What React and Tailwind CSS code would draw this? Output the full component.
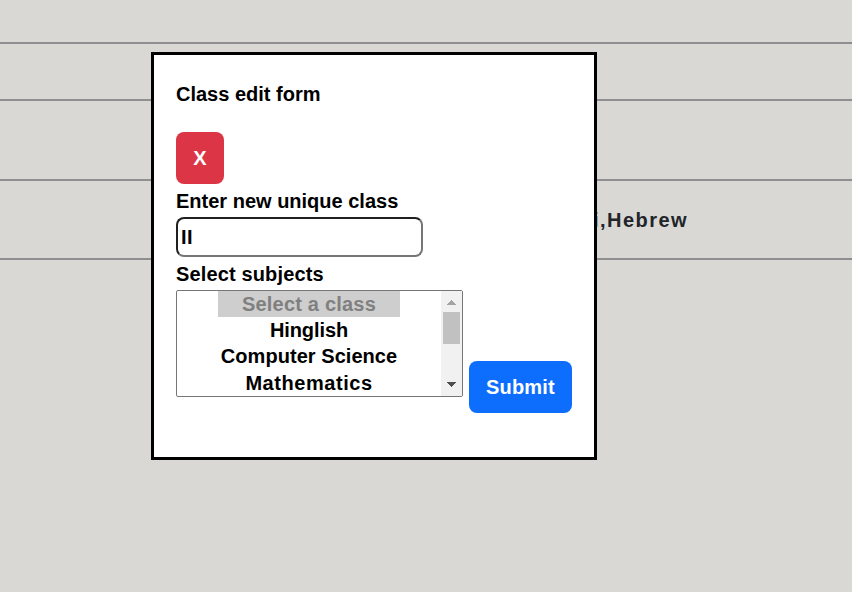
const subjects = [
  { name: "Hinglish", spacing: "tracking-[-0.1px]" },
  { name: "Computer Science", spacing: "tracking-[0.05px]" },
  { name: "Mathematics", spacing: "tracking-[0.55px]" },
];

function TableRows() {
  return (
    <div className="flex flex-col">
      <div className="h-[44px] border-b-2 border-[#8f8e90]" />
      <div className="h-[57px] border-b-2 border-[#8f8e90]" />
      <div className="h-[80px] border-b-2 border-[#8f8e90]" />
      <div className="flex h-[79px] items-center border-b-2 border-[#8f8e90] pl-[593px] text-[#212529]">
        <span className="tracking-[1.45px]">i,Hebrew</span>
      </div>
    </div>
  );
}

function SubjectList() {
  return (
    <div className="flex h-[107px] w-[287px] shrink-0 rounded-[2px] border border-[#767676] bg-white">
      <div className="flex flex-1 flex-col items-center">
        <div className="h-[26px] w-[182px] bg-[#cecece] text-center leading-[26px] tracking-[0.2px] text-[#808080]">Select a class</div>
        {subjects.map((s) => (
          <div key={s.name} className={`h-[26.4px] whitespace-nowrap leading-[26.4px] ${s.spacing}`}>{s.name}</div>
        ))}
      </div>
      <div className="flex w-[21px] flex-col items-center bg-[#f1f1f1] pt-[9px] pb-[9px]">
        <svg width="9" height="5" viewBox="0 0 9 5" className="block shrink-0" shapeRendering="crispEdges">
          <path d="M4 0h1v1h1v1h1v1h1v1h1v1H0V4h1V3h1V2h1V1h1z" fill="#a3a3a3" />
        </svg>
        <div className="mt-[7px] h-8 w-[17px] shrink-0 bg-[#c1c1c1]" />
        <svg width="9" height="5" viewBox="0 0 9 5" className="mt-auto block shrink-0" shapeRendering="crispEdges">
          <path d="M0 0h9v1H8v1H7v1H6v1H5v1H4V4H3V3H2V2H1V1H0z" fill="#505050" />
        </svg>
      </div>
    </div>
  );
}

export default function App() {
  return (
    <div className="relative h-[592px] w-[852px] overflow-hidden bg-[#d9d8d4] font-['Liberation_Sans',Arial,sans-serif] text-[20px] font-bold text-black">
      <TableRows />
      <div className="absolute left-[151px] top-[52px] flex h-[408px] w-[446px] flex-col items-start border-[3px] border-black bg-white pl-[22px]">
        <h1 className="mt-[24px] h-[30px] leading-[30px]">Class edit form</h1>
        <button className="mt-[23px] h-[52px] w-[48px] shrink-0 rounded-lg bg-[#dc3545] text-white">X</button>
        <label className="mt-[2px] h-[30px] leading-[30px]">Enter new unique class</label>
        <input
          defaultValue="II"
          className="mt-px h-[40px] w-[247px] shrink-0 rounded-lg border-2 border-t-[#202020] border-r-[#767676] border-b-[#767676] border-l-[#202020] bg-white px-[3px] tracking-[0.4px] outline-none"
        />
        <label className="mt-[2px] h-[30px] leading-[30px] tracking-[0.14px]">Select subjects</label>
        <div className="mt-px flex items-start gap-[6px]">
          <SubjectList />
          <button className="mt-[71px] h-[52px] w-[103px] shrink-0 rounded-lg bg-[#0d6efd] tracking-[0.2px] text-white">Submit</button>
        </div>
      </div>
    </div>
  );
}
